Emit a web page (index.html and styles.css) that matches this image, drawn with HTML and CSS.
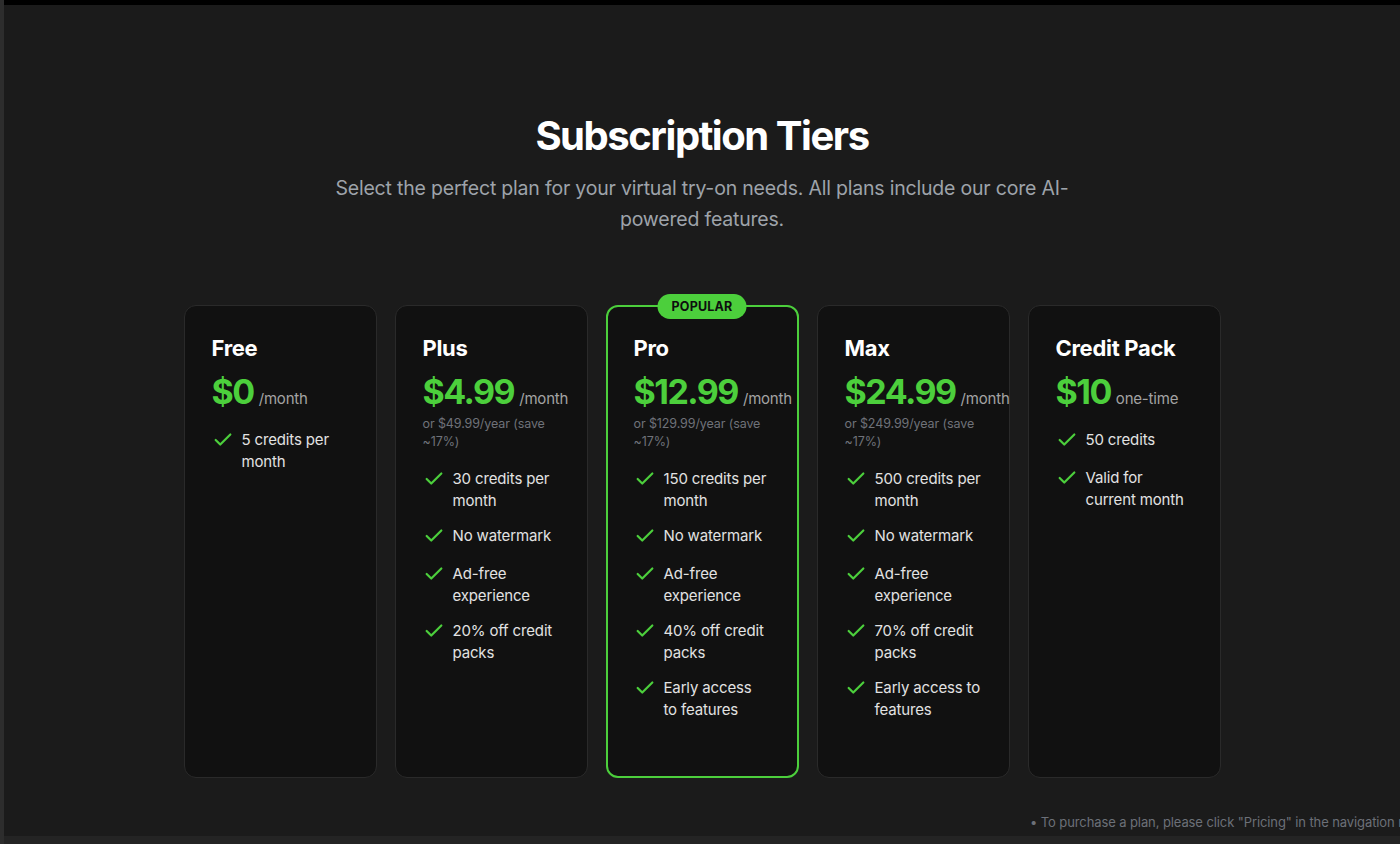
FILE: index.html
```html
<!DOCTYPE html>
<html lang="en">
<head>
<meta charset="utf-8">
<title>Subscription Tiers</title>
<link rel="stylesheet" href="styles.css">
</head>
<body>
<div class="app">
  <div class="rail"></div>
  <div class="main">
    <div class="topbar"></div>
    <section class="tiers">
      <h1 class="title">Subscription Tiers</h1>
      <p class="lead">Select the perfect plan for your virtual try-on needs. All plans include our core AI-powered features.</p>
      <div class="cards">
        <article class="card">
          <h2 class="name">Free</h2>
          <div class="price"><span class="amount">$0</span><span class="per">/month</span></div>
          <ul class="features">
            <li><svg class="check" viewBox="0 0 24 24"><path d="M20 6 9 17l-5-5"/></svg><span>5 credits per month</span></li>
          </ul>
        </article>
        <article class="card">
          <h2 class="name">Plus</h2>
          <div class="price"><span class="amount">$4.99</span><span class="per">/month</span></div>
          <p class="yearly">or $49.99/year (save ~17%)</p>
          <ul class="features">
            <li><svg class="check" viewBox="0 0 24 24"><path d="M20 6 9 17l-5-5"/></svg><span>30 credits per month</span></li>
            <li><svg class="check" viewBox="0 0 24 24"><path d="M20 6 9 17l-5-5"/></svg><span>No watermark</span></li>
            <li><svg class="check" viewBox="0 0 24 24"><path d="M20 6 9 17l-5-5"/></svg><span>Ad-free experience</span></li>
            <li><svg class="check" viewBox="0 0 24 24"><path d="M20 6 9 17l-5-5"/></svg><span>20% off credit packs</span></li>
          </ul>
        </article>
        <article class="card card-popular">
          <span class="badge">POPULAR</span>
          <h2 class="name">Pro</h2>
          <div class="price"><span class="amount">$12.99</span><span class="per">/month</span></div>
          <p class="yearly">or $129.99/year (save ~17%)</p>
          <ul class="features">
            <li><svg class="check" viewBox="0 0 24 24"><path d="M20 6 9 17l-5-5"/></svg><span>150 credits per month</span></li>
            <li><svg class="check" viewBox="0 0 24 24"><path d="M20 6 9 17l-5-5"/></svg><span>No watermark</span></li>
            <li><svg class="check" viewBox="0 0 24 24"><path d="M20 6 9 17l-5-5"/></svg><span>Ad-free experience</span></li>
            <li><svg class="check" viewBox="0 0 24 24"><path d="M20 6 9 17l-5-5"/></svg><span>40% off credit packs</span></li>
            <li><svg class="check" viewBox="0 0 24 24"><path d="M20 6 9 17l-5-5"/></svg><span>Early access to features</span></li>
          </ul>
        </article>
        <article class="card">
          <h2 class="name">Max</h2>
          <div class="price"><span class="amount">$24.99</span><span class="per">/month</span></div>
          <p class="yearly">or $249.99/year (save ~17%)</p>
          <ul class="features">
            <li><svg class="check" viewBox="0 0 24 24"><path d="M20 6 9 17l-5-5"/></svg><span>500 credits per month</span></li>
            <li><svg class="check" viewBox="0 0 24 24"><path d="M20 6 9 17l-5-5"/></svg><span>No watermark</span></li>
            <li><svg class="check" viewBox="0 0 24 24"><path d="M20 6 9 17l-5-5"/></svg><span>Ad-free experience</span></li>
            <li><svg class="check" viewBox="0 0 24 24"><path d="M20 6 9 17l-5-5"/></svg><span>70% off credit packs</span></li>
            <li><svg class="check" viewBox="0 0 24 24"><path d="M20 6 9 17l-5-5"/></svg><span>Early access to features</span></li>
          </ul>
        </article>
        <article class="card">
          <h2 class="name">Credit Pack</h2>
          <div class="price"><span class="amount">$10</span><span class="per">one-time</span></div>
          <ul class="features">
            <li><svg class="check" viewBox="0 0 24 24"><path d="M20 6 9 17l-5-5"/></svg><span>50 credits</span></li>
            <li><svg class="check" viewBox="0 0 24 24"><path d="M20 6 9 17l-5-5"/></svg><span>Valid for current month</span></li>
          </ul>
        </article>
      </div>
    </section>
    <p class="note">• To purchase a plan, please click "Pricing" in the navigation menu to view details and subscribe.</p>
    <div class="bottombar"></div>
  </div>
</div>
</body>
</html>
```

FILE: styles.css
```css
* { box-sizing: border-box; }

html, body {
  margin: 0;
  padding: 0;
  height: 100%;
}

body {
  background: #1b1b1b;
  font-family: Inter, "Noto Sans", "Liberation Sans", sans-serif;
  color: #ffffff;
  overflow: hidden;
}

.app {
  display: flex;
  height: 844px;
}

.rail {
  width: 4px;
  flex: none;
  background: #2d2d2d;
}

.main {
  flex: 1;
  display: flex;
  flex-direction: column;
  min-width: 0;
  overflow: hidden;
}

.topbar {
  height: 5px;
  flex: none;
  background: #000000;
}

.tiers {
  padding-top: 107px;
  display: flex;
  flex-direction: column;
  align-items: center;
}

.title {
  margin: 0;
  font-size: 40px;
  line-height: 48px;
  font-weight: 700;
  letter-spacing: -1.45px;
  color: #ffffff;
}

.lead {
  margin: 13px 0 0;
  max-width: 760px;
  text-align: center;
  font-size: 19.5px;
  line-height: 31px;
  color: #9ea3aa;
  letter-spacing: -0.2px;
}

.cards {
  margin-top: 70px;
  display: grid;
  grid-template-columns: repeat(5, 193px);
  gap: 18px;
}

.card {
  position: relative;
  min-height: 473px;
  background: #111111;
  border: 1px solid #2a2a2a;
  border-radius: 12px;
  padding: 28px 26px 27px 27px;
}

.card-popular {
  border: 2px solid #4ccf3c;
  padding: 27px 29px 26px 26px;
}

.badge {
  position: absolute;
  top: -13px;
  left: 50%;
  transform: translateX(-50%);
  background: #4ccf3c;
  color: #0e0e0e;
  font-size: 12.5px;
  font-weight: 700;
  line-height: 25px;
  height: 25px;
  padding: 0 14px;
  border-radius: 999px;
  letter-spacing: 0.2px;
  white-space: nowrap;
}

.name {
  margin: 0;
  font-size: 22px;
  line-height: 28px;
  font-weight: 700;
  letter-spacing: -0.3px;
  color: #ffffff;
}

.price {
  margin-top: 10px;
  display: flex;
  align-items: baseline;
  white-space: nowrap;
  gap: 5px;
}

.amount {
  font-size: 34px;
  line-height: 40px;
  font-weight: 700;
  color: #4ccf3c;
  letter-spacing: -1.5px;
}

.per {
  font-size: 15px;
  color: #a3a3a3;
  letter-spacing: -0.2px;
}

.yearly {
  margin: 3px 0 0;
  font-size: 12.5px;
  line-height: 18px;
  color: #6f7279;
  letter-spacing: -0.1px;
}

.features {
  list-style: none;
  margin: 17px 0 0;
  padding: 0;
  display: flex;
  flex-direction: column;
  gap: 13px;
}

.features li {
  display: flex;
  align-items: flex-start;
  gap: 8px;
  min-height: 25px;
  font-size: 15px;
  line-height: 22px;
  color: #e2e2e2;
  letter-spacing: -0.15px;
}

.check {
  flex: none;
  width: 22px;
  height: 22px;
  fill: none;
  stroke: #4ccf3c;
  stroke-width: 2.4;
  stroke-linecap: round;
  stroke-linejoin: round;
}

.note {
  margin: 35px 0 0;
  padding-left: 1026px;
  white-space: nowrap;
  font-size: 13px;
  line-height: 18px;
  color: #6c7078;
  letter-spacing: -0.1px;
}

.bottombar {
  margin-top: auto;
  height: 8px;
  flex: none;
  background: #242424;
}
```
